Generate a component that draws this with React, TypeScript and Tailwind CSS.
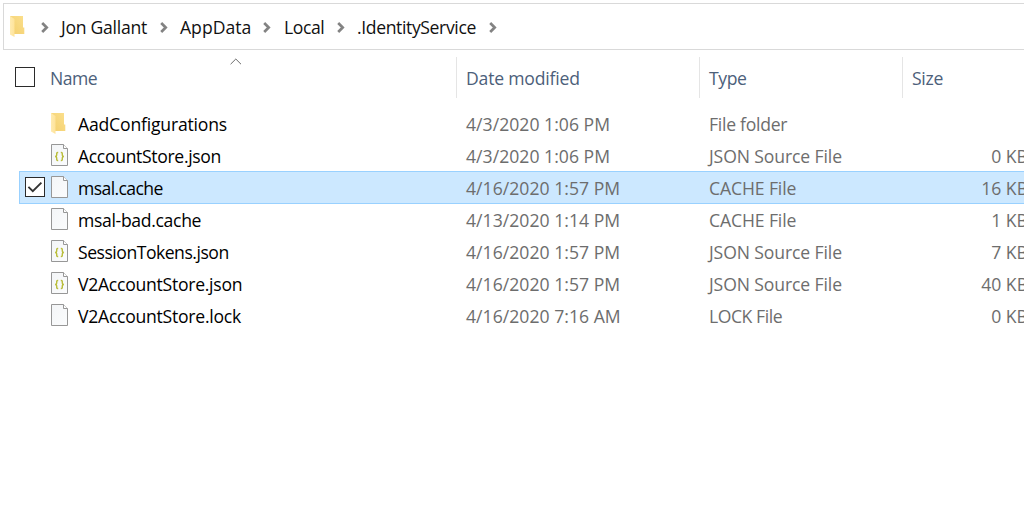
import React from "react";

type FileKind = "folder" | "json" | "blank";

interface Entry {
  name: string;
  nameTracking: string;
  date: string;
  type: string;
  typeTracking: string;
  size: string;
  kind: FileKind;
  selected?: boolean;
}

const entries: Entry[] = [
  { name: "AadConfigurations", nameTracking: "tracking-[-0.19px]", date: "4/3/2020 1:06 PM", type: "File folder", typeTracking: "tracking-[-0.27px]", size: "", kind: "folder" },
  { name: "AccountStore.json", nameTracking: "tracking-[-0.34px]", date: "4/3/2020 1:06 PM", type: "JSON Source File", typeTracking: "tracking-[-0.12px]", size: "0 KB", kind: "json" },
  { name: "msal.cache", nameTracking: "tracking-[-0.6px]", date: "4/16/2020 1:57 PM", type: "CACHE File", typeTracking: "tracking-[-0.12px]", size: "16 KB", kind: "blank", selected: true },
  { name: "msal-bad.cache", nameTracking: "tracking-[-0.33px]", date: "4/13/2020 1:14 PM", type: "CACHE File", typeTracking: "tracking-[-0.12px]", size: "1 KB", kind: "blank" },
  { name: "SessionTokens.json", nameTracking: "tracking-[-0.49px]", date: "4/16/2020 1:57 PM", type: "JSON Source File", typeTracking: "tracking-[-0.12px]", size: "7 KB", kind: "json" },
  { name: "V2AccountStore.json", nameTracking: "tracking-[-0.27px]", date: "4/16/2020 1:57 PM", type: "JSON Source File", typeTracking: "tracking-[-0.12px]", size: "40 KB", kind: "json" },
  { name: "V2AccountStore.lock", nameTracking: "tracking-[-0.26px]", date: "4/16/2020 7:16 AM", type: "LOCK File", typeTracking: "tracking-[-0.45px]", size: "0 KB", kind: "blank" },
];

function FolderIcon() {
  return (
    <svg width="15" height="22" viewBox="0 0 15 22" className="block shrink-0">
      <defs>
        <linearGradient id="folderBack" x1="0" x2="1" y1="1" y2="0">
          <stop offset="0" stopColor="#f3cf6e" />
          <stop offset="1" stopColor="#fbdf8c" />
        </linearGradient>
        <linearGradient id="folderFlap" x1="0" x2="1" y1="0" y2="0">
          <stop offset="0" stopColor="#ffebb0" />
          <stop offset="1" stopColor="#fee39a" />
        </linearGradient>
      </defs>
      <path d="M0 0H13V11.5H14.3V18H3Z" fill="url(#folderBack)" />
      <path d="M0 0L4.5 3V21L0 18.5Z" fill="url(#folderFlap)" />
    </svg>
  );
}

function PageIcon({ json }: { json: boolean }) {
  return (
    <svg width="17" height="22" viewBox="0 0 17 22" className="block shrink-0">
      <defs>
        <linearGradient id="pageFill" x1="0" x2="1" y1="0" y2="1">
          <stop offset="0" stopColor="#f3f5f7" />
          <stop offset="1" stopColor="#fbfcfd" />
        </linearGradient>
      </defs>
      <path d="M0.5 0.5H12.5L16.5 4.5V21.5H0.5Z" fill="url(#pageFill)" stroke="#979797" />
      <path d="M12.5 0.5V4.5H16.5" fill="#ffffff" stroke="#979797" />
      {json && (
        <g fill="none" stroke="#b9bd3a" strokeWidth="1.4">
          <path d="M7.2 8.5H6.6Q5.7 8.5 5.7 9.4V11.3Q5.7 12.4 4.1 12.5Q5.7 12.6 5.7 13.7V15.6Q5.7 16.5 6.6 16.5H7.2" />
          <path d="M9.8 8.5H10.4Q11.3 8.5 11.3 9.4V11.3Q11.3 12.4 12.9 12.5Q11.3 12.6 11.3 13.7V15.6Q11.3 16.5 10.4 16.5H9.8" />
        </g>
      )}
    </svg>
  );
}

function Chevron() {
  return (
    <svg width="8" height="11" viewBox="0 0 8 11" className="block shrink-0">
      <path d="M1.2 1L5.7 5.5L1.2 10" fill="none" stroke="#838383" strokeWidth="2.7" />
    </svg>
  );
}

function Checkbox({ checked }: { checked: boolean }) {
  return (
    <svg width="20" height="20" viewBox="0 0 20 20" className="block shrink-0">
      <rect x="0.5" y="0.5" width="19" height="19" fill="#ffffff" stroke="#2b2b2b" />
      {checked && <path d="M3.4 9.8L7.8 14.2L16.4 5.6" fill="none" stroke="#333333" strokeWidth="1.9" />}
    </svg>
  );
}

function AddressBar() {
  return (
    <nav className="mt-[3px] ml-[3px] flex h-[47px] items-center border-y border-l border-[#d9d9d9] pl-[6px] text-[#111111]">
      <div className="w-[31px] pt-px"><FolderIcon /></div>
      <div className="w-5 pt-px"><Chevron /></div>
      <div className="w-[99px] tracking-[-0.28px]">Jon Gallant</div>
      <div className="w-5 pt-px"><Chevron /></div>
      <div className="w-[83px]">AppData</div>
      <div className="w-[21px] pt-px"><Chevron /></div>
      <div className="w-[53px] tracking-[-0.4px]">Local</div>
      <div className="w-5 pt-px"><Chevron /></div>
      <div className="w-[132px] tracking-[-0.38px]">.IdentityService</div>
      <div className="pt-px"><Chevron /></div>
    </nav>
  );
}

function ColumnHeader() {
  return (
    <header className="relative mt-[7px] flex h-[41px] text-[#4c607a]">
      <div className="flex w-[456px] shrink-0 items-center pl-[15px]">
        <div className="-mt-0.5"><Checkbox checked={false} /></div>
        <span className="ml-[15px] tracking-[-0.5px]">Name</span>
      </div>
      <div className="flex w-[243px] shrink-0 items-center border-l border-[#e5e5e5] pl-[9px] tracking-[-0.2px]">Date modified</div>
      <div className="flex w-[203px] shrink-0 items-center border-l border-[#e5e5e5] pl-[9px] tracking-[-0.4px]">Type</div>
      <div className="flex grow items-center border-l border-[#e5e5e5] pl-[9px] tracking-[-0.3px]">Size</div>
      <svg width="12" height="7" viewBox="0 0 12 7" className="absolute top-px left-[230px]">
        <path d="M0.6 6.2L5.8 1L11 6.2" fill="none" stroke="#6b6b6b" />
      </svg>
    </header>
  );
}

function FileRow({ entry }: { entry: Entry }) {
  return (
    <div
      className={
        entry.selected
          ? "-mt-px ml-[19px] flex h-[33px] items-center border-y border-l border-[#99d1ff] bg-[#cce8ff]"
          : "ml-[20px] flex h-8 items-center"
      }
    >
      <div className="-mt-px w-[31px] shrink-0 pl-[5px]">{entry.selected && <Checkbox checked />}</div>
      <div className="-mt-0.5 w-[27px] shrink-0">
        {entry.kind === "folder" ? <div className="pt-0.5"><FolderIcon /></div> : <PageIcon json={entry.kind === "json"} />}
      </div>
      <div className={`w-[388px] shrink-0 text-black ${entry.nameTracking}`}>{entry.name}</div>
      <div className="w-[243px] shrink-0 tracking-[0.03px] text-[#6d6d6d]">{entry.date}</div>
      <div className={`w-[203px] shrink-0 text-[#6d6d6d] ${entry.typeTracking}`}>{entry.type}</div>
      <div className="w-[116px] shrink-0 text-right text-[#6d6d6d]">{entry.size}</div>
    </div>
  );
}

export default function App() {
  return (
    <main className="h-[512px] w-[1024px] overflow-hidden bg-white font-['Open_Sans','Noto_Sans',sans-serif] text-[17.6px] leading-6 whitespace-nowrap">
      <AddressBar />
      <ColumnHeader />
      <section className="mt-[10px]">
        {entries.map((entry) => (
          <FileRow key={entry.name} entry={entry} />
        ))}
      </section>
    </main>
  );
}
